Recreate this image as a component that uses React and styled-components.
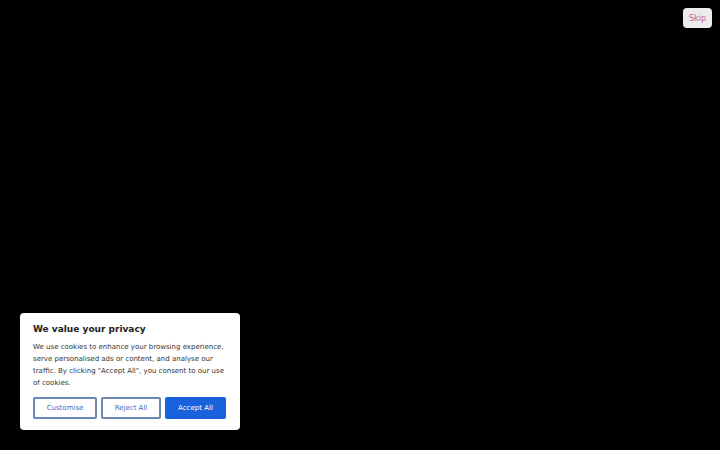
import React from 'react';
import styled, { createGlobalStyle } from 'styled-components';

const GlobalStyle = createGlobalStyle`
  html, body {
    margin: 0;
    padding: 0;
    background: #000;
    height: 100%;
  }
  body {
    font-family: "DejaVu Sans", sans-serif;
  }
`;

const Page = styled.div`
  position: relative;
  width: 720px;
  height: 450px;
  background: #000;
  overflow: hidden;
`;

const SkipButton = styled.button`
  position: absolute;
  top: 8px;
  right: 8px;
  width: 29px;
  height: 20px;
  padding: 0;
  border: none;
  border-radius: 4px;
  background: #ececef;
  color: #cf5a80;
  font-family: "DejaVu Sans", sans-serif;
  font-size: 8px;
  cursor: pointer;
`;

const Banner = styled.div`
  position: absolute;
  left: 20px;
  bottom: 20px;
  width: 220px;
  box-sizing: border-box;
  padding: 10px 13px 11px;
  background: #fff;
  border-radius: 4px;
`;

const Title = styled.h2`
  margin: 0 0 6px;
  font-size: 9px;
  font-weight: bold;
  color: #212121;
  line-height: 12px;
`;

const Text = styled.p`
  margin: 0 0 8px;
  font-size: 7px;
  line-height: 12px;
  color: #333;
`;

const Actions = styled.div`
  display: flex;
  gap: 4px;
`;

const Button = styled.button`
  height: 22px;
  width: ${p => p.w}px;
  padding: 0;
  box-sizing: border-box;
  border: 2px solid ${p => (p.primary ? '#1863dc' : '#6b87b8')};
  border-radius: 2px;
  background: ${p => (p.primary ? '#1863dc' : '#fff')};
  color: ${p => (p.primary ? '#fff' : '#3d6db5')};
  font-family: "DejaVu Sans", sans-serif;
  font-size: 7px;
  cursor: pointer;
`;

export default function App() {
  return (
    <Page>
      <GlobalStyle />
      <SkipButton>Skip</SkipButton>
      <Banner>
        <Title>We value your privacy</Title>
        <Text>
          We use cookies to enhance your browsing experience, serve personalised ads or content, and analyse our
          traffic. By clicking "Accept All", you consent to our use of cookies.
        </Text>
        <Actions>
          <Button w={64}>Customise</Button>
          <Button w={60}>Reject All</Button>
          <Button w={61} primary>Accept All</Button>
        </Actions>
      </Banner>
    </Page>
  );
}
